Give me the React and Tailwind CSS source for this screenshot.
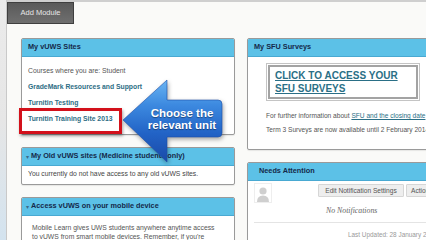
import React from "react";

function Header({ children, arrow, pl = "pl-[6px]" }) {
  return (
    <div className={`flex h-[18px] items-center border-b border-[#49a9d2] bg-[#5cc1e7] ${pl}`}>
      {arrow && <span className="mr-[2px] text-[6px] leading-none text-[#3d6a8a]">▾</span>}
      <span className="text-[7.3px] font-bold text-[#15294a] whitespace-nowrap">{children}</span>
    </div>
  );
}

function Panel({ children, className = "" }) {
  return (
    <div className={`overflow-hidden rounded-[2px] border border-[#9a9a9a] bg-white shadow-[0_1px_1px_rgba(0,0,0,0.08)] ${className}`}>
      {children}
    </div>
  );
}

export default function App() {
  return (
    <div className="relative flex h-[240px] w-[426px] overflow-hidden bg-white font-['Liberation_Sans',Arial,sans-serif]">
      <div className="w-[7px] shrink-0 border-r border-[#c9c9c9] bg-gradient-to-b from-[#ebebeb] via-[#e6e6e6] to-[#d3e3ef]" />
      <div className="min-w-0 flex-1 border-t-2 border-[#cfcfcf] bg-[#fafaf8]">
        <div className="flex h-[22px]">
          <div className="flex h-[22px] w-[67px] items-center justify-center border border-[#3f3f3f] bg-gradient-to-b from-[#5a5a5a] to-[#6f6f6f] text-[7.5px] text-[#e6e6e6]">
            Add Module
          </div>
        </div>
        <div className="flex gap-[12px] pl-[14px] pt-[14px]">
          {/* left column */}
          <div className="flex w-[214px] shrink-0 flex-col gap-[12px]">
            <Panel className="h-[97px]">
              <Header>My vUWS Sites</Header>
              <div className="flex flex-col pl-[6px] pt-[6px] text-[6.8px] leading-[16px]">
                <span className="text-[#555]">Courses where you are: Student</span>
                <span className="font-bold text-[#2d6d84]">GradeMark Resources and Support</span>
                <span className="font-bold text-[#2d6d84]">Turnitin Testing</span>
                <span className="font-bold text-[#2d6d84]">Turnitin Training Site 2013</span>
              </div>
            </Panel>
            <Panel className="h-[38px]">
              <Header arrow pl="pl-[4px]">My Old vUWS sites (Medicine students only)</Header>
              <div className="pl-[6px] pt-[2px] text-[6.8px] leading-[12px] text-[#444] whitespace-nowrap">
                You currently do not have access to any old vUWS sites.
              </div>
            </Panel>
            <Panel className="h-[60px]">
              <Header arrow pl="pl-[4px]">Access vUWS on your mobile device</Header>
              <div className="pl-[10px] pt-[7px] text-[6.8px] leading-[9px] text-[#555] whitespace-nowrap">
                <div>Mobile Learn gives UWS students anywhere anytime access</div>
                <div>to vUWS from smart mobile devices. Remember, if you're</div>
              </div>
            </Panel>
          </div>
          {/* right column */}
          <div className="flex w-[240px] shrink-0 flex-col gap-[12px]">
            <Panel className="h-[112px]">
              <Header>My SFU Surveys</Header>
              <div className="pl-[18px] pt-[6px]">
                <div className="w-[154px] border border-[#c4c4c4] p-[1px]">
                  <div className="border-2 border-[#a3a3a3] pb-[2px] pl-[5px] pt-[2px] text-[10px] font-bold leading-[13px] text-[#2a6f86] underline">
                    <div>CLICK TO ACCESS YOUR</div>
                    <div>SFU SURVEYS</div>
                  </div>
                </div>
                <div className="mt-[10px] whitespace-nowrap text-[6.6px] leading-[10px] text-[#555]">
                  For further information about{" "}
                  <span className="text-[#2a6f86] underline">SFU and the closing date</span>
                </div>
                <div className="mt-[4px] whitespace-nowrap text-[6.6px] leading-[10px] text-[#555]">
                  Term 3 Surveys are now available until 2 February 2014
                </div>
              </div>
            </Panel>
            <Panel className="h-[90px]">
              <div className="flex h-[18px] items-center border-b border-[#49a9d2] bg-[#5cc1e7] pl-[11px]">
                <span className="text-[7.3px] font-bold text-[#15294a]">Needs Attention</span>
              </div>
              <div className="pl-[6px]">
                <div className="flex items-start">
                  <div className="mt-[2px] flex h-[20px] w-[18px] items-end justify-center border border-[#eeeeee] bg-white">
                    <svg width="14" height="16" viewBox="0 0 14 16">
                      <circle cx="7" cy="5" r="3.6" fill="#cfcfcf" />
                      <path d="M1 16 Q1 9.5 7 9.5 Q13 9.5 13 16 Z" fill="#cfcfcf" />
                    </svg>
                  </div>
                  <div className="ml-[46px] mt-[3px] flex h-[13px] w-[86px] items-center justify-center rounded-[1px] border border-[#d6d6d6] bg-[#eeeeee] text-[6.6px] text-[#555] whitespace-nowrap">
                    Edit Notification Settings
                  </div>
                  <div className="ml-[2px] mt-[3px] flex h-[13px] w-[40px] items-center rounded-[1px] border border-[#d6d6d6] bg-[#eeeeee] pl-[4px] text-[6.6px] text-[#555] whitespace-nowrap">
                    Actions
                  </div>
                </div>
                <div className="mt-[3px] pl-[72px] font-['Liberation_Serif',serif] text-[7.8px] italic leading-[10px] text-[#666]">
                  No Notifications
                </div>
                <div className="mt-[6px] border-t border-[#e4e4e4]" />
                <div className="mt-[8px] pl-[94px] text-[6.4px] leading-[8px] text-[#999] whitespace-nowrap">
                  Last Updated: 28 January 2014
                </div>
              </div>
            </Panel>
          </div>
        </div>
      </div>

      {/* red highlight box */}
      <div className="pointer-events-none absolute left-[19px] top-[108px] h-[26px] w-[103px] border-[3px] border-[#d3111b] shadow-[1px_2px_3px_rgba(0,0,0,0.35)]" />

      {/* callout arrow */}
      <svg className="absolute left-[120px] top-[78px] drop-shadow-[1px_2px_2px_rgba(0,0,0,0.35)]" width="106" height="86" viewBox="0 0 106 86">
        <defs>
          <linearGradient id="cg" x1="0" y1="0" x2="0" y2="1">
            <stop offset="0" stopColor="#6ab4f2" />
            <stop offset="0.3" stopColor="#3d8ae0" />
            <stop offset="0.65" stopColor="#2263c6" />
            <stop offset="1" stopColor="#1a4aa8" />
          </linearGradient>
        </defs>
        <path d="M3 42 L47 2 L47 22 L98 22 Q102 22 102 26 L102 55 Q102 59 98 59 L47 59 L47 84 Z" fill="url(#cg)" stroke="#1d4fa8" strokeWidth="0.6" />
      </svg>
      <div className="absolute left-[140px] top-[107px] w-[84px] text-center text-[11.5px] font-bold leading-[12px] text-white [text-shadow:0_1px_1px_rgba(0,0,0,0.4)] whitespace-nowrap">
        <div>Choose the</div>
        <div>relevant unit</div>
      </div>
    </div>
  );
}
